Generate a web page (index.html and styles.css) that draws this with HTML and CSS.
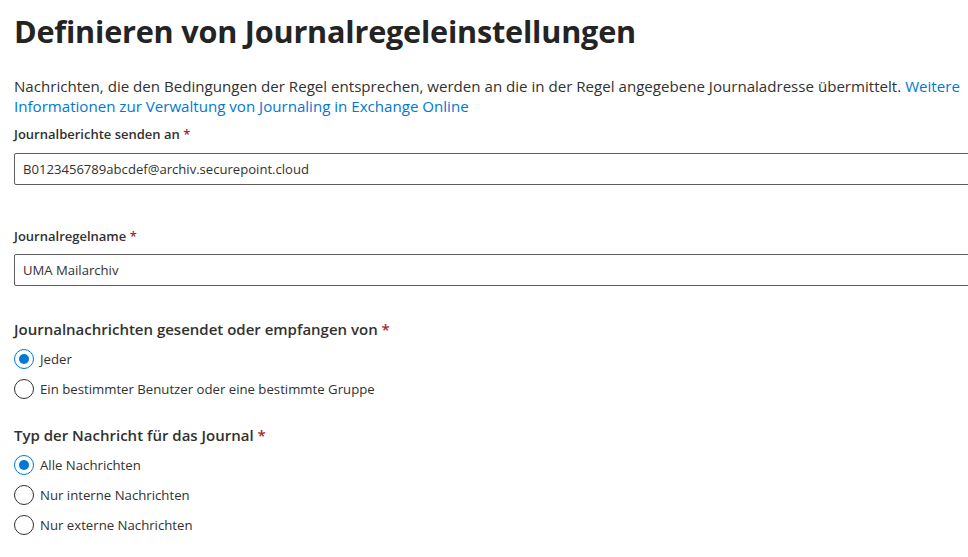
FILE: index.html
```html
<!DOCTYPE html>
<html lang="de">
<head>
<meta charset="utf-8">
<link rel="stylesheet" href="styles.css">
</head>
<body>
<main class="panel">
  <h1 class="title">Definieren von Journalregeleinstellungen</h1>
  <p class="desc">Nachrichten, die den Bedingungen der Regel entsprechen, werden an die in der Regel angegebene Journaladresse übermittelt. <a class="link" href="#">Weitere Informationen zur Verwaltung von Journaling in Exchange Online</a></p>

  <div class="field first">
    <label class="label">Journalberichte senden an <span class="req">*</span></label>
    <div class="input">B0123456789abcdef@archiv.securepoint.cloud</div>
  </div>

  <div class="field second">
    <label class="label">Journalregelname <span class="req">*</span></label>
    <div class="input">UMA Mailarchiv</div>
  </div>

  <div class="group g1">
    <div class="group-title">Journalnachrichten gesendet oder empfangen von <span class="req">*</span></div>
    <div class="option"><span class="radio checked"></span><span>Jeder</span></div>
    <div class="option"><span class="radio"></span><span>Ein bestimmter Benutzer oder eine bestimmte Gruppe</span></div>
  </div>

  <div class="group g2">
    <div class="group-title">Typ der Nachricht für das Journal <span class="req">*</span></div>
    <div class="option"><span class="radio checked"></span><span>Alle Nachrichten</span></div>
    <div class="option"><span class="radio"></span><span>Nur interne Nachrichten</span></div>
    <div class="option"><span class="radio"></span><span>Nur externe Nachrichten</span></div>
  </div>
</main>
</body>
</html>
```

FILE: styles.css
```css
html, body {
  margin: 0;
  padding: 0;
  background: #ffffff;
}
body {
  font-family: "Open Sans", "Noto Sans", "Liberation Sans", sans-serif;
  color: #323130;
  overflow: hidden;
}
.panel {
  padding: 11px 0 0 14px;
  width: 1000px;
}
.title {
  margin: 0;
  font-size: 30.6px;
  line-height: 40px;
  font-weight: 700;
  color: #242424;
  letter-spacing: -0.2px;
}
.desc {
  margin: 25px 0 0 0;
  font-size: 15.1px;
  line-height: 20px;
  color: #323130;
  width: 954px;
}
.link {
  color: #0078d4;
  text-decoration: none;
}
.field {
  display: flex;
  flex-direction: column;
}
.first { margin-top: 8px; }
.second { margin-top: 41px; }
.label {
  font-size: 13px;
  line-height: 20px;
  font-weight: 600;
  color: #323130;
}
.req {
  color: #a4262c;
}
.input {
  margin-top: 8px;
  height: 30px;
  border: 1px solid #605e5c;
  border-radius: 2px;
  box-sizing: content-box;
  padding: 0 8px;
  font-size: 13.1px;
  line-height: 30px;
  color: #323130;
}
.first .input { margin-top: 9px; }
.group {
  display: flex;
  flex-direction: column;
}
.g1 { margin-top: 32px; }
.g2 { margin-top: 20px; }
.group-title {
  font-size: 15px;
  line-height: 22px;
  font-weight: 600;
  color: #323130;
  margin-bottom: 4px;
}
.option {
  display: flex;
  align-items: center;
  height: 30px;
  font-size: 13.2px;
  gap: 6px;
  color: #323130;
}
.radio {
  width: 18px;
  height: 18px;
  border: 1px solid #323130;
  border-radius: 50%;
  position: relative;
  flex: none;
}
.radio.checked {
  border-color: #0078d4;
}
.radio.checked::after {
  content: "";
  position: absolute;
  left: 4px;
  top: 4px;
  width: 10px;
  height: 10px;
  border-radius: 50%;
  background: #0078d4;
}
```
